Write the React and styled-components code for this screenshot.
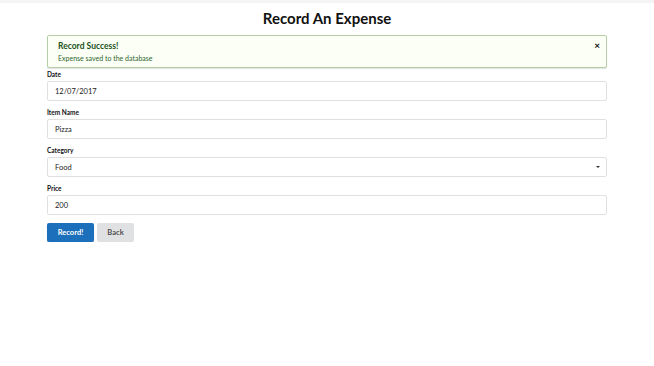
import React from "react";
import styled, { createGlobalStyle } from "styled-components";

const Global = createGlobalStyle`
  html, body { margin: 0; padding: 0; background: #fff; }
  body { font-family: Lato, "Open Sans", sans-serif; color: rgba(0,0,0,.87); }
  * { box-sizing: border-box; }
`;

const TopBar = styled.div`
  height: 3px;
  background: #f4f4f4;
`;

const Container = styled.div`
  width: 560px;
  margin: 0 auto;
  display: flex;
  flex-direction: column;
`;

const Title = styled.h1`
  margin: 7px 0 0;
  height: 25px;
  font-size: 15px;
  font-weight: 700;
  line-height: 17px;
  text-align: center;
  color: #111;
`;

const Message = styled.div`
  position: relative;
  height: 33px;
  background: #fcfff5;
  border: 1px solid #b7cfa7;
  border-radius: 2px;
  box-shadow: 0 1px 1px rgba(0,0,0,.12);
  padding: 5px 10px;
  display: flex;
  flex-direction: column;
  gap: 2px;
`;

const MsgHeader = styled.div`
  font-size: 8.5px;
  font-weight: 700;
  color: #1a531b;
  line-height: 10px;
`;

const MsgContent = styled.div`
  font-size: 7px;
  color: #2c662d;
  line-height: 10px;
`;

const Close = styled.span`
  position: absolute;
  right: 6px;
  top: 4px;
  font-size: 10px;
  font-weight: 900;
  color: #222;
  line-height: 10px;
`;

const Field = styled.div`
  display: flex;
  flex-direction: column;
  margin-top: ${p => p.$first ? "3px" : "8px"};
`;

const Label = styled.label`
  font-size: 6.5px;
  font-weight: 700;
  color: #111;
  line-height: 8px;
  height: 10px;
`;

const InputBox = styled.div`
  position: relative;
  height: 20px;
  border: 1px solid #e0e0e0;
  border-radius: 2px;
  padding: 0 7px;
  display: flex;
  align-items: center;
  font-size: 7.5px;
  color: #222;
  background: #fff;
`;

const Caret = styled.span`
  position: absolute;
  right: 6px;
  top: 8px;
  width: 0;
  height: 0;
  border-left: 2px solid transparent;
  border-right: 2px solid transparent;
  border-top: 2.5px solid #333;
`;

const Buttons = styled.div`
  display: flex;
  gap: 3px;
  margin-top: 8px;
`;

const Button = styled.button`
  height: 19px;
  width: ${p => p.$w}px;
  border: none;
  border-radius: 2px;
  font-family: Lato, sans-serif;
  font-size: 7.5px;
  font-weight: 700;
  padding: 0;
  background: ${p => p.$primary ? "#1c6fba" : "#e0e1e2"};
  color: ${p => p.$primary ? "#fff" : "rgba(0,0,0,.7)"};
  box-shadow: ${p => p.$primary ? "0 1px 1px rgba(0,0,0,.2)" : "none"};
`;

export default function App() {
  return (
    <>
      <Global />
      <TopBar />
      <Container>
        <Title>Record An Expense</Title>
        <Message>
          <MsgHeader>Record Success!</MsgHeader>
          <MsgContent>Expense saved to the database</MsgContent>
          <Close>×</Close>
        </Message>
        <Field $first>
          <Label>Date</Label>
          <InputBox>12/07/2017</InputBox>
        </Field>
        <Field>
          <Label>Item Name</Label>
          <InputBox>Pizza</InputBox>
        </Field>
        <Field>
          <Label>Category</Label>
          <InputBox>Food<Caret /></InputBox>
        </Field>
        <Field>
          <Label>Price</Label>
          <InputBox>200</InputBox>
        </Field>
        <Buttons>
          <Button $primary $w={47}>Record!</Button>
          <Button $w={37}>Back</Button>
        </Buttons>
      </Container>
    </>
  );
}
